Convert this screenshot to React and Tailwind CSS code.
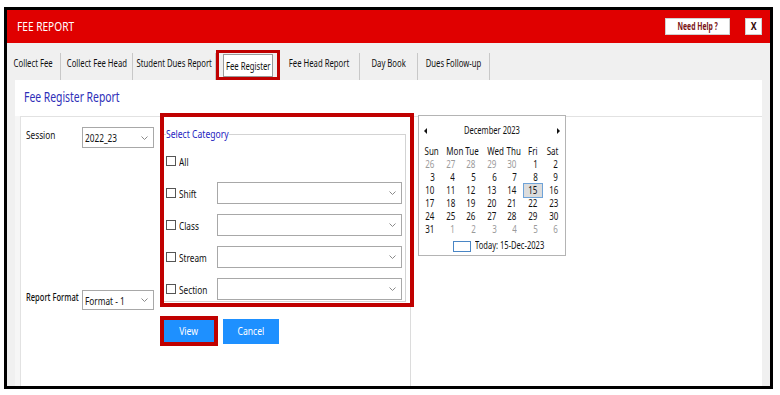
import React from 'react'

const tabs = [
  { label: 'Collect Fee', w: 'w-[54px]' },
  { label: 'Collect Fee Head', w: 'w-[72px]' },
  { label: 'Student Dues Report', w: 'w-[83px]' },
  { label: 'Fee Register', w: 'w-[64px]', active: true },
  { label: 'Fee Head Report', w: 'w-[80px]' },
  { label: 'Day Book', w: 'w-[58px]' },
  { label: 'Dues Follow-up', w: 'w-[72px]' },
]

const m = (d) => ({ d, muted: true })
const n = (d) => ({ d })
const weeks = [
  [m(26), m(27), m(28), m(29), m(30), n(1), n(2)],
  [n(3), n(4), n(5), n(6), n(7), n(8), n(9)],
  [n(10), n(11), n(12), n(13), n(14), { d: 15, sel: true }, n(16)],
  [n(17), n(18), n(19), n(20), n(21), n(22), n(23)],
  [n(24), n(25), n(26), n(27), n(28), n(29), n(30)],
  [n(31), m(1), m(2), m(3), m(4), m(5), m(6)],
]

// the screenshot's text is squashed sideways, so glyphs get a horizontal scale
const T = ({ s = 'scale-x-[0.75]', o = 'origin-left', className = '', children }) => (
  <span className={`inline-block whitespace-nowrap ${o} ${s} ${className}`}>{children}</span>
)

const Chevron = () => (
  <svg width="7" height="4" viewBox="0 0 7 4" className="shrink-0">
    <polyline points="0.5,0.5 3.5,3.5 6.5,0.5" fill="none" stroke="#8a8a8a" strokeWidth="1" />
  </svg>
)

function Select({ value, className }) {
  return (
    <div className={`flex items-center justify-between bg-white border border-[#a8a8a8] pl-[2px] pr-[5px] ${className}`}>
      <T className="text-[11px] text-[#111] leading-none">{value}</T>
      <Chevron />
    </div>
  )
}

function CheckRow({ label, select = true }) {
  return (
    <div className="flex items-center h-[32px]">
      <div className="flex items-center w-[51px] shrink-0">
        <span className="w-[10px] h-[10px] border border-[#555] bg-white shrink-0"></span>
        <T className="ml-[3px] text-[11px] text-[#111] mt-[3px]">{label}</T>
      </div>
      {select && <Select className="w-[185px] h-[22px]" />}
    </div>
  )
}

function Calendar() {
  return (
    <div className="w-[148px] h-[141px] border border-[#b4b4b4] bg-white ml-[7px] -mt-[2px] pt-[7px] shrink-0">
      <div className="h-[16px] flex items-center justify-between px-[5px]">
        <span className="w-0 h-0 border-y-[3px] border-y-transparent border-r-[3px] border-r-[#111]"></span>
        <T s="scale-x-[0.72]" o="origin-center" className="text-[10.5px] text-[#111]">December 2023</T>
        <span className="w-0 h-0 border-y-[3px] border-y-transparent border-l-[3px] border-l-[#111]"></span>
      </div>
      <div className="grid grid-cols-7 w-[144px] ml-[1px] mt-[5px] h-[14px] text-[10.5px] text-[#111] leading-[14px]">
        {['Sun', 'Mon', 'Tue', 'Wed', 'Thu', 'Fri', 'Sat'].map((d) => (
          <div key={d} className="text-right pr-[6px]">
            <T s="scale-x-[0.76]" o="origin-right">{d}</T>
          </div>
        ))}
      </div>
      <div className="w-[144px] ml-[1px]">
        {weeks.map((wk, i) => (
          <div key={i} className="grid grid-cols-7 h-[13px] text-[10px] leading-[13px]">
            {wk.map((c, j) => (
              <div
                key={j}
                className={
                  c.sel
                    ? 'text-right pr-[5px] bg-[#dcdcdc] border border-[#6fa3d8] text-[#111] -mt-[1px] h-[15px] leading-[13px]'
                    : c.muted
                    ? 'text-right pr-[6px] text-[#9a9a9a]'
                    : 'text-right pr-[6px] text-[#111]'
                }
              >
                <T s="scale-x-[0.8]" o="origin-right">{c.d}</T>
              </div>
            ))}
          </div>
        ))}
      </div>
      <div className="flex items-center h-[16px] mt-[2px] pl-[34px]">
        <span className="w-[18px] h-[11px] border border-[#4a86c5] bg-white shrink-0"></span>
        <T s="scale-x-[0.72]" className="ml-[4px] text-[10.5px] text-[#111]">Today: 15-Dec-2023</T>
      </div>
    </div>
  )
}

export default function App() {
  return (
    <div className="w-[780px] h-[395px] bg-white pt-[7px] pl-[4px] font-['Noto_Sans',sans-serif]">
      <div className="w-[769px] h-[382px] border-[3px] border-black flex flex-col overflow-hidden">
        {/* red title bar */}
        <div className="h-[33px] bg-[#e00000] flex items-center pl-[10px] pr-[8px] shrink-0">
          <T s="scale-x-[0.78]" className="text-white text-[13px]">FEE REPORT</T>
          <div className="ml-auto flex items-center gap-[15px]">
            <div className="w-[65px] h-[17px] bg-white border border-[#d0d0d0] flex items-center justify-center">
              <T s="scale-x-[0.68]" o="origin-center" className="text-[10px] font-bold text-[#7a1414]">Need Help ?</T>
            </div>
            <div className="w-[17px] h-[17px] bg-white border border-[#d0d0d0] flex items-center justify-center">
              <T s="scale-x-[0.8]" o="origin-center" className="text-[11px] font-bold text-[#3a0a0a]">X</T>
            </div>
          </div>
        </div>

        <div className="flex-1 bg-[#f0f0f0] flex flex-col">
          {/* tabs */}
          <div className="h-[37px] flex items-end shrink-0">
            {tabs.map((t) =>
              t.active ? (
                <div key={t.label} className={`${t.w} h-[30px] border-[3px] border-[#c00000] pt-[1px] px-[4px]`}>
                  <div className="h-[23px] bg-white border border-[#9a9a9a] flex items-center justify-center">
                    <T s="scale-x-[0.67]" o="origin-center" className="text-[11.5px] text-[#111]">{t.label}</T>
                  </div>
                </div>
              ) : (
                <div key={t.label} className={`${t.w} h-[27px] border-r border-[#c8c8c8] flex justify-center pt-[1px]`}>
                  <T s="scale-x-[0.67]" o="origin-center" className="text-[11.5px] text-[#111]">{t.label}</T>
                </div>
              )
            )}
          </div>

          {/* white content panel */}
          <div className="flex-1 bg-white mx-[8px] flex flex-col">
            <div className="h-[36px] flex items-center pl-[9px] pb-[3px] shrink-0">
              <T s="scale-x-[0.74]" className="text-[14px] text-[#2e2eb8]">Fee Register Report</T>
            </div>

            <div className="flex-1 flex bg-[#f6f6f6]">
              <div className="flex-1 ml-[5px] border-l border-t border-[#e2e2e2] flex bg-white">
                {/* left column */}
                <div className="w-[139px] shrink-0 pl-[5px] pt-[10px] flex flex-col">
                  <div className="flex items-start">
                    <div className="w-[56px] text-[11px] leading-[16px]">
                      <T className="text-[#111]">Session</T>
                    </div>
                    <Select value="2022_23" className="w-[72px] h-[21px]" />
                  </div>
                  <div className="flex items-start mt-[142px]">
                    <div className="w-[56px] text-[10.5px] leading-[14px]">
                      <T s="scale-x-[0.72]" className="text-[#111] font-medium">Report Format</T>
                    </div>
                    <Select value="Format - 1" className="w-[72px] h-[20px]" />
                  </div>
                </div>

                {/* middle column */}
                <div className="w-[251px] shrink-0 border-r border-[#dcdcdc] flex flex-col">
                  <div className="relative z-10 w-[254px] h-[194px] -mt-[4px] border-[4px] border-[#c00000] bg-white pt-[9px]">
                    <fieldset className="border border-l-0 border-[#d3d3d3] mr-[4px] h-[176px] pl-[2px]">
                      <legend className="w-[63px] text-[11px] text-[#2424c0] leading-[16px] px-0">
                        <T s="scale-x-[0.78]">Select Category</T>
                      </legend>
                      <div className="mt-[3px]">
                        <CheckRow label="All" select={false} />
                        <CheckRow label="Shift" />
                        <CheckRow label="Class" />
                        <CheckRow label="Stream" />
                        <CheckRow label="Section" />
                      </div>
                    </fieldset>
                  </div>
                  <div className="flex items-center mt-[9px]">
                    <div className="border-[4px] border-[#c00000]">
                      <button className="w-[50px] h-[22px] bg-[#1e90ff] text-white text-[11.5px] flex items-center justify-center">
                        <T o="origin-center">View</T>
                      </button>
                    </div>
                    <button className="ml-[5px] w-[56px] h-[25px] bg-[#1e90ff] text-white text-[11.5px] flex items-center justify-center">
                      <T o="origin-center">Cancel</T>
                    </button>
                  </div>
                </div>

                {/* calendar */}
                <Calendar />
              </div>
            </div>
          </div>
        </div>
      </div>
    </div>
  )
}
